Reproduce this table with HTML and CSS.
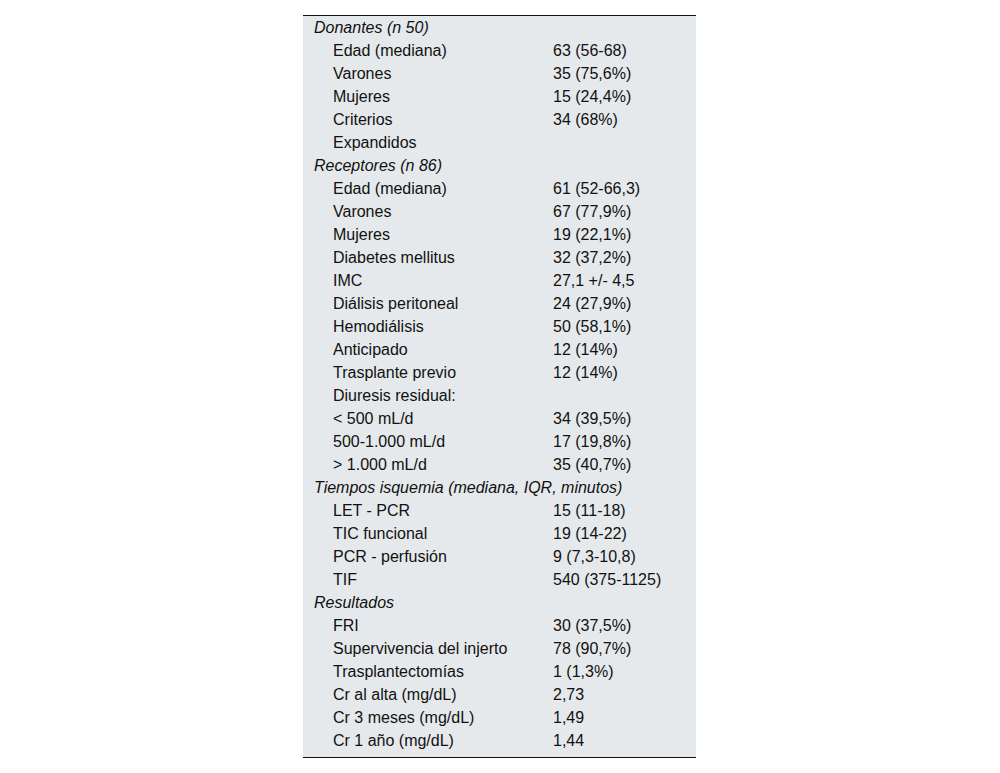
FILE: index.html
```html
<!DOCTYPE html>
<html>
<head>
<meta charset="utf-8">
<link rel="stylesheet" href="styles.css">
</head>
<body>
<div class="wrap">
<table class="tbl">
<colgroup><col class="c1"><col class="c2"></colgroup>
<tbody>
<tr class="sec"><td colspan="2">Donantes (n 50)</td></tr>
<tr><td class="lab">Edad (mediana)</td><td class="val">63 (56-68)</td></tr>
<tr><td class="lab">Varones</td><td class="val">35 (75,6%)</td></tr>
<tr><td class="lab">Mujeres</td><td class="val">15 (24,4%)</td></tr>
<tr><td class="lab">Criterios</td><td class="val">34 (68%)</td></tr>
<tr><td class="lab">Expandidos</td><td class="val"></td></tr>
<tr class="sec"><td colspan="2">Receptores (n 86)</td></tr>
<tr><td class="lab">Edad (mediana)</td><td class="val">61 (52-66,3)</td></tr>
<tr><td class="lab">Varones</td><td class="val">67 (77,9%)</td></tr>
<tr><td class="lab">Mujeres</td><td class="val">19 (22,1%)</td></tr>
<tr><td class="lab">Diabetes mellitus</td><td class="val">32 (37,2%)</td></tr>
<tr><td class="lab">IMC</td><td class="val">27,1 +/- 4,5</td></tr>
<tr><td class="lab">Diálisis peritoneal</td><td class="val">24 (27,9%)</td></tr>
<tr><td class="lab">Hemodiálisis</td><td class="val">50 (58,1%)</td></tr>
<tr><td class="lab">Anticipado</td><td class="val">12 (14%)</td></tr>
<tr><td class="lab">Trasplante previo</td><td class="val">12 (14%)</td></tr>
<tr><td class="lab">Diuresis residual:</td><td class="val"></td></tr>
<tr><td class="lab">&lt; 500 mL/d</td><td class="val">34 (39,5%)</td></tr>
<tr><td class="lab">500-1.000 mL/d</td><td class="val">17 (19,8%)</td></tr>
<tr><td class="lab">&gt; 1.000 mL/d</td><td class="val">35 (40,7%)</td></tr>
<tr class="sec"><td colspan="2">Tiempos isquemia (mediana, IQR, minutos)</td></tr>
<tr><td class="lab">LET - PCR</td><td class="val">15 (11-18)</td></tr>
<tr><td class="lab">TIC funcional</td><td class="val">19 (14-22)</td></tr>
<tr><td class="lab">PCR - perfusión</td><td class="val">9 (7,3-10,8)</td></tr>
<tr><td class="lab">TIF</td><td class="val">540 (375-1125)</td></tr>
<tr class="sec"><td colspan="2">Resultados</td></tr>
<tr><td class="lab">FRI</td><td class="val">30 (37,5%)</td></tr>
<tr><td class="lab">Supervivencia del injerto</td><td class="val">78 (90,7%)</td></tr>
<tr><td class="lab">Trasplantectomías</td><td class="val">1 (1,3%)</td></tr>
<tr><td class="lab">Cr al alta (mg/dL)</td><td class="val">2,73</td></tr>
<tr><td class="lab">Cr 3 meses (mg/dL)</td><td class="val">1,49</td></tr>
<tr class="last"><td class="lab">Cr 1 año (mg/dL)</td><td class="val">1,44</td></tr>
</tbody>
</table>
</div>
</body>
</html>
```
FILE: styles.css
```css
html, body {
  margin: 0;
  padding: 0;
  background: #ffffff;
}
body {
  font-family: "Liberation Sans", Arial, sans-serif;
  font-size: 16px;
  color: #111111;
}
.wrap {
  padding-top: 15px;
  padding-left: 303px;
}
.tbl {
  width: 393px;
  table-layout: fixed;
  border-collapse: collapse;
  background: #e5e9ec;
  border-top: 1px solid #111;
  border-bottom: 1px solid #111;
}
.c1 {
  width: 250px;
}
.c2 {
  width: 143px;
}
.tbl td {
  height: 23px;
  padding: 0;
  line-height: 23px;
  vertical-align: middle;
  white-space: nowrap;
}
.sec td {
  font-style: italic;
  padding-left: 11px;
}
.tbl .lab {
  padding-left: 30px;
}
.val {
  padding-left: 0;
}
.last td {
  height: 28px;
  line-height: 23px;
  vertical-align: top;
}
```
